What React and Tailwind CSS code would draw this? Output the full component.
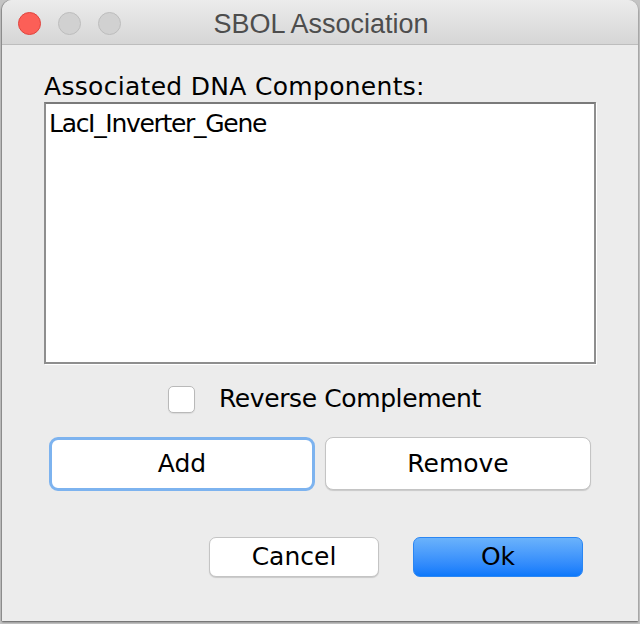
import React from "react";

export default function App() {
  const body = { fontFamily: '"DejaVu Sans", "Liberation Sans", sans-serif' };
  return (
    <div className="w-[640px] h-[624px] bg-[#c4c4c4] overflow-hidden">
      <div
        className="ml-[2px] w-[636px] h-[621px] bg-[#ececec] rounded-t-[10px] flex flex-col shadow-[-1px_0_1px_#8a8a8a,0_1px_2px_#5a5a5a] overflow-hidden"
        style={body}
      >
        {/* Title bar */}
        <div className="relative h-[45px] shrink-0 bg-gradient-to-b from-[#ececec] to-[#d6d6d6] border-b border-[#bdbdbd] flex items-center justify-center">
          <div className="absolute left-[16px] top-[12px] flex gap-[17px]">
            <span className="w-[23px] h-[23px] rounded-full bg-[#fc5f57] border border-[#e0443e]" />
            <span className="w-[23px] h-[23px] rounded-full bg-[#d1d1d1] border border-[#bdbdbd]" />
            <span className="w-[23px] h-[23px] rounded-full bg-[#d1d1d1] border border-[#bdbdbd]" />
          </div>
          <span
            className="text-[27px] leading-[30px] text-[#4d4d4d] ml-[2px] mt-[3px]"
            style={{ fontFamily: '"Liberation Sans", Arial, sans-serif' }}
          >
            SBOL Association
          </span>
        </div>

        {/* Content */}
        <div className="flex flex-col px-[42px]">
          <div className="mt-[27px] text-[25px] leading-[30px] tracking-[0.3px] text-black">
            Associated DNA Components:
          </div>
          <div className="h-[262px] bg-white border-2 border-[#8e8e8e] border-t-[#7a7a7a] shadow-[1px_1px_0_#ffffff] pl-[3px] pt-[5px]">
            <div className="text-[25px] leading-[30px] tracking-[-1.3px] text-black">LacI_Inverter_Gene</div>
          </div>

          <div className="mt-[20px] h-[30px] flex items-center pl-[124px]">
            <span className="w-[27px] h-[27px] rounded-[5px] bg-white border border-[#b9b9b9] shadow-[0_1px_1px_rgba(0,0,0,0.08)]" />
            <span className="ml-[24px] text-[25px] leading-[30px] tracking-[-0.4px] text-black">Reverse Complement</span>
          </div>

          <div className="mt-[23px] px-[5px] grid grid-cols-2 gap-[10px]">
            <button className="h-[54px] rounded-[9px] bg-white border-[3px] border-[#7db3ef] text-[25px] leading-[30px] text-black flex items-center justify-center" style={body}>
              Add
            </button>
            <button className="h-[53px] rounded-[8px] bg-white border border-[#c4c4c4] shadow-[0_1px_1px_rgba(0,0,0,0.15)] text-[25px] leading-[30px] text-black flex items-center justify-center" style={body}>
              Remove
            </button>
          </div>

          <div className="mt-[46px] flex justify-end gap-[34px] pr-[13px]">
            <button className="w-[170px] h-[40px] rounded-[7px] bg-white border border-[#c4c4c4] shadow-[0_1px_1px_rgba(0,0,0,0.15)] text-[25px] leading-[30px] text-black flex items-center justify-center" style={body}>
              Cancel
            </button>
            <button className="w-[170px] h-[40px] rounded-[7px] bg-gradient-to-b from-[#6ab2fb] to-[#0a78fb] border border-[#2a86f3] text-[25px] leading-[30px] text-black flex items-center justify-center" style={body}>
              Ok
            </button>
          </div>
        </div>
      </div>
    </div>
  );
}
